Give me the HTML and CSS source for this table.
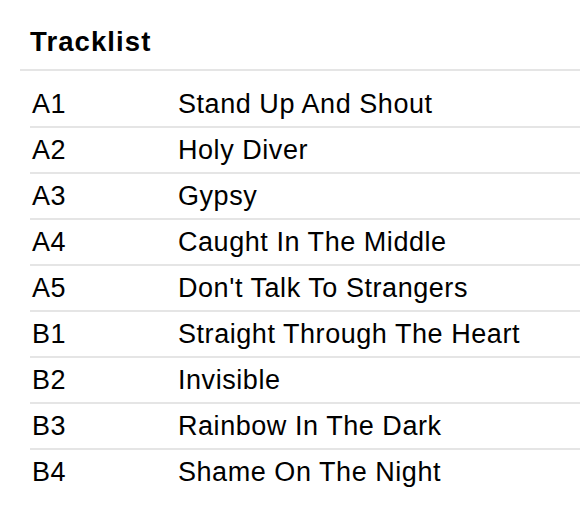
FILE: index.html
```html
<!DOCTYPE html>
<html>
<head>
<meta charset="utf-8">
<link rel="stylesheet" href="styles.css">
</head>
<body>
<section class="tracklist">
  <h2 class="title">Tracklist</h2>
  <table class="tracks">
    <tbody>
      <tr><td class="pos">A1</td><td class="name">Stand Up And Shout</td></tr>
      <tr><td class="pos">A2</td><td class="name">Holy Diver</td></tr>
      <tr><td class="pos">A3</td><td class="name">Gypsy</td></tr>
      <tr><td class="pos">A4</td><td class="name">Caught In The Middle</td></tr>
      <tr><td class="pos">A5</td><td class="name">Don't Talk To Strangers</td></tr>
      <tr><td class="pos">B1</td><td class="name">Straight Through The Heart</td></tr>
      <tr><td class="pos">B2</td><td class="name">Invisible</td></tr>
      <tr><td class="pos">B3</td><td class="name">Rainbow In The Dark</td></tr>
      <tr><td class="pos">B4</td><td class="name">Shame On The Night</td></tr>
    </tbody>
  </table>
</section>
</body>
</html>
```
FILE: styles.css
```css
html, body {
  margin: 0;
  padding: 0;
  background: #ffffff;
}
body {
  font-family: "Liberation Sans", Arial, Helvetica, sans-serif;
  color: #000;
}
.tracklist {
  padding-left: 20px;
}
.title {
  margin: 0;
  padding: 26px 10px 11px;
  font-size: 27.5px;
  letter-spacing: 1.1px;
  line-height: 32px;
  font-weight: bold;
  border-bottom: 2px solid #e5e5e5;
}
.tracks {
  margin: 11px 0 0 10px;
  width: calc(100% - 10px);
  border-collapse: collapse;
}
.tracks td {
  padding: 0;
  height: 44px;
  line-height: 44px;
  font-size: 27px;
  letter-spacing: 0.55px;
  vertical-align: top;
}
.tracks tr {
  border-bottom: 2px solid #e5e5e5;
}
.tracks tr:last-child {
  border-bottom: none;
}
.pos {
  width: 146px;
  padding-left: 2px !important;
}
```
